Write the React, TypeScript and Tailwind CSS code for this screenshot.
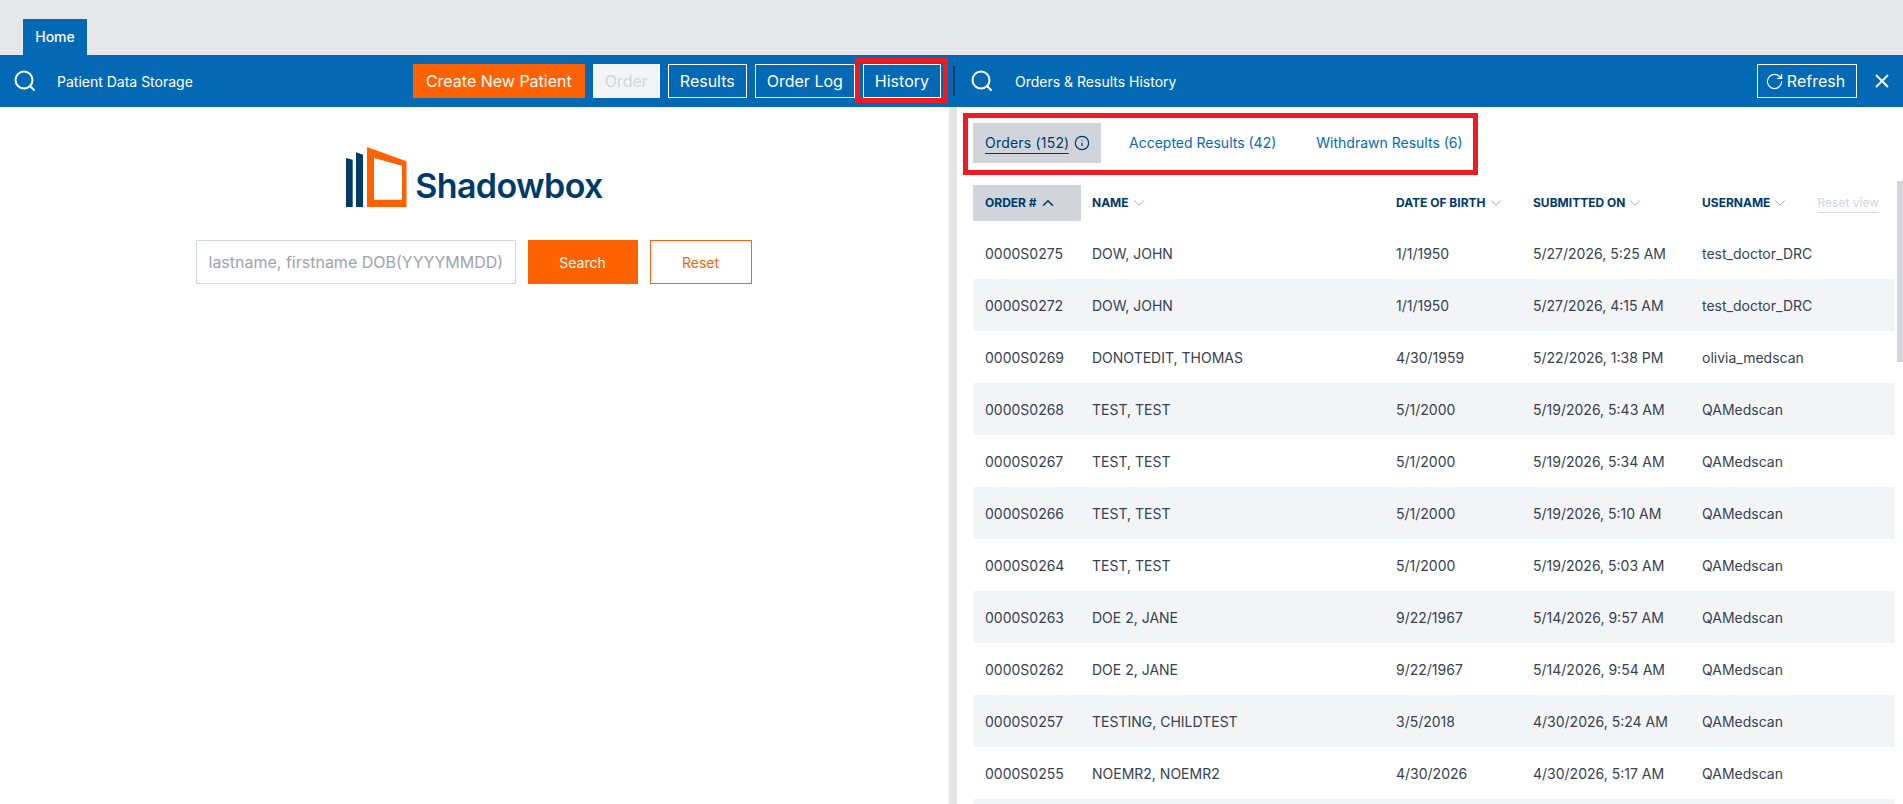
import React from 'react';
import { ChevronDown, ChevronUp, Info, RotateCw, X } from 'lucide-react';

const rows = [
  ['0000S0275', 'DOW, JOHN', '1/1/1950', '5/27/2026, 5:25 AM', 'test_doctor_DRC'],
  ['0000S0272', 'DOW, JOHN', '1/1/1950', '5/27/2026, 4:15 AM', 'test_doctor_DRC'],
  ['0000S0269', 'DONOTEDIT, THOMAS', '4/30/1959', '5/22/2026, 1:38 PM', 'olivia_medscan'],
  ['0000S0268', 'TEST, TEST', '5/1/2000', '5/19/2026, 5:43 AM', 'QAMedscan'],
  ['0000S0267', 'TEST, TEST', '5/1/2000', '5/19/2026, 5:34 AM', 'QAMedscan'],
  ['0000S0266', 'TEST, TEST', '5/1/2000', '5/19/2026, 5:10 AM', 'QAMedscan'],
  ['0000S0264', 'TEST, TEST', '5/1/2000', '5/19/2026, 5:03 AM', 'QAMedscan'],
  ['0000S0263', 'DOE 2, JANE', '9/22/1967', '5/14/2026, 9:57 AM', 'QAMedscan'],
  ['0000S0262', 'DOE 2, JANE', '9/22/1967', '5/14/2026, 9:54 AM', 'QAMedscan'],
  ['0000S0257', 'TESTING, CHILDTEST', '3/5/2018', '4/30/2026, 5:24 AM', 'QAMedscan'],
  ['0000S0255', 'NOEMR2, NOEMR2', '4/30/2026', '4/30/2026, 5:17 AM', 'QAMedscan'],
  ['', '', '', '', ''],
];

const SearchIcon = () => (
  <svg width="22" height="22" viewBox="0 0 22 22" fill="none" stroke="white" strokeWidth="2" strokeLinecap="round">
    <circle cx="10" cy="10" r="8.5" />
    <path d="M16.5 16.5L20 20" />
  </svg>
);

const Logo = () => (
  <svg width="61" height="60" viewBox="0 0 61 60">
    <path d="M0 11L6.700 12.700V60H0Z" fill="#003a6b" />
    <path d="M10 5.300L17 7.700V60H10Z" fill="#003a6b" />
    <path fillRule="evenodd" d="M21 0L60.500 14.300V60H21ZM28 11V52.700H56V18.700Z" fill="#ff6200" />
  </svg>
);

const HeaderCell = ({ label }: { label: string }) => (
  <div className="flex items-center gap-[1px] text-[12px] font-bold text-[#003a6b]">
    {label}
    <ChevronDown size={18} strokeWidth={1.25} className="text-gray-400" />
  </div>
);

const OutlineButton = ({ label }: { label: string }) => (
  <button className="h-[34px] border border-white px-[11px] text-[16px] text-white">{label}</button>
);

export default function App() {
  return (
    <div className="relative h-[804px] w-[1903px] overflow-hidden bg-white font-['Inter',sans-serif]">
      <div className="flex h-[55px] items-end bg-[#e5e7eb] pl-[23px]">
        <div className="flex h-[36px] w-[64px] items-center justify-center bg-[#0369b5] pb-[2px] text-[14px] font-medium text-white">
          Home
        </div>
      </div>

      <div className="flex h-[52px] items-center bg-[#0369b5] text-white">
        <div className="flex w-[953px] items-center pr-[12px] pl-[14px]">
          <SearchIcon />
          <span className="ml-[21px] text-[14px]">Patient Data Storage</span>
          <div className="ml-auto flex items-center gap-[8px]">
            <button className="h-[34px] w-[172px] bg-[#ff6200] text-[16px] text-white">Create New Patient</button>
            <button className="h-[34px] w-[67px] bg-[#f3f4f6] text-[16px] text-[#d1d5db]">Order</button>
            <OutlineButton label="Results" />
            <OutlineButton label="Order Log" />
            <OutlineButton label="History" />
          </div>
        </div>
        <div className="h-[30px] w-[2px] bg-[#003a6b]" />
        <div className="flex flex-1 items-center pl-[16px]">
          <SearchIcon />
          <span className="ml-[22px] text-[14px]">Orders &amp; Results History</span>
          <button className="ml-auto flex h-[34px] w-[100px] items-center justify-center gap-[3px] border border-white pr-[4px] text-[16px] text-white">
            <RotateCw size={19} strokeWidth={1.5} />
            Refresh
          </button>
          <X size={22} strokeWidth={2} className="mr-[10px] ml-[14px]" />
        </div>
      </div>

      <div className="flex h-[697px]">
        <div className="flex w-[949px] flex-col items-center pt-[40px]">
          <div className="flex items-end">
            <Logo />
            <span className="mb-[1px] ml-[8px] text-[34px] leading-[40px] font-semibold tracking-[-0.6px] text-[#003a6b]">
              Shadowbox
            </span>
          </div>
          <div className="mt-[33px] -ml-[2px] flex gap-[12px]">
            <input
              placeholder="lastname, firstname DOB(YYYYMMDD)"
              className="h-[44px] w-[320px] border border-[#d1d5db] px-[12px] text-[16px] placeholder:text-[#9ca3af]"
            />
            <button className="h-[44px] w-[110px] bg-[#ff6200] text-[14px] text-white">Search</button>
            <button className="h-[44px] w-[102px] border border-[#ff6200] text-[14px] text-[#ff6200]">Reset</button>
          </div>
        </div>

        <div className="w-[8px] bg-[#e5e5e5]" />

        <div className="flex-1 pr-[8px] pl-[16px]">
          <div className="flex h-[78px] items-start pt-[16px] text-[14px] text-[#0369b5]">
            <div className="flex h-[40px] w-[128px] items-center gap-[5px] bg-[#d1d5db] pl-[12px] tracking-[0.2px] text-[#003a6b]">
              <span className="border-b border-[#003a6b]">Orders (152)</span>
              <Info size={16} strokeWidth={1.75} />
            </div>
            <div className="flex h-[40px] items-center pb-[1px] pl-[28px]">Accepted Results (42)</div>
            <div className="flex h-[40px] items-center pb-[1px] pl-[40px]">Withdrawn Results (6)</div>
          </div>

          <div className="grid h-[36px] grid-cols-[119px_304px_137px_169px_1fr] items-center">
            <div className="flex h-[36px] w-[108px] items-center gap-[2px] bg-[#d1d5db] pl-[12px] text-[12px] font-bold text-[#003a6b]">
              ORDER #
              <ChevronUp size={18} strokeWidth={2} />
            </div>
            <HeaderCell label="NAME" />
            <HeaderCell label="DATE OF BIRTH" />
            <HeaderCell label="SUBMITTED ON" />
            <div className="flex items-center justify-between pr-[16px]">
              <HeaderCell label="USERNAME" />
              <span className="border-b border-[#d1d5db] text-[12px] text-[#d1d5db]">Reset view</span>
            </div>
          </div>

          <div className="mt-[6px]">
            {rows.map((row, i) => (
              <div
                key={i}
                className={`grid h-[52px] grid-cols-[107px_304px_137px_169px_1fr] items-center pl-[12px] text-[14px] text-[#374151] ${
                  i % 2 === 1 ? 'bg-[#f3f4f6]' : ''
                }`}
              >
                {row.map((cell, j) => (
                  <span key={j}>{cell}</span>
                ))}
              </div>
            ))}
          </div>
        </div>
      </div>

      {/* scrollbar thumb */}
      <div className="absolute top-[181px] left-[1897px] h-[181px] w-[6px] bg-[#d1d5db]" />

      {/* red annotation boxes */}
      <div className="absolute top-[58px] left-[855px] h-[45px] w-[93px] border-[5px] border-[#ed1c24]" />
      <div className="absolute top-[113px] left-[963px] h-[62px] w-[515px] border-[5px] border-[#ed1c24]" />
    </div>
  );
}
